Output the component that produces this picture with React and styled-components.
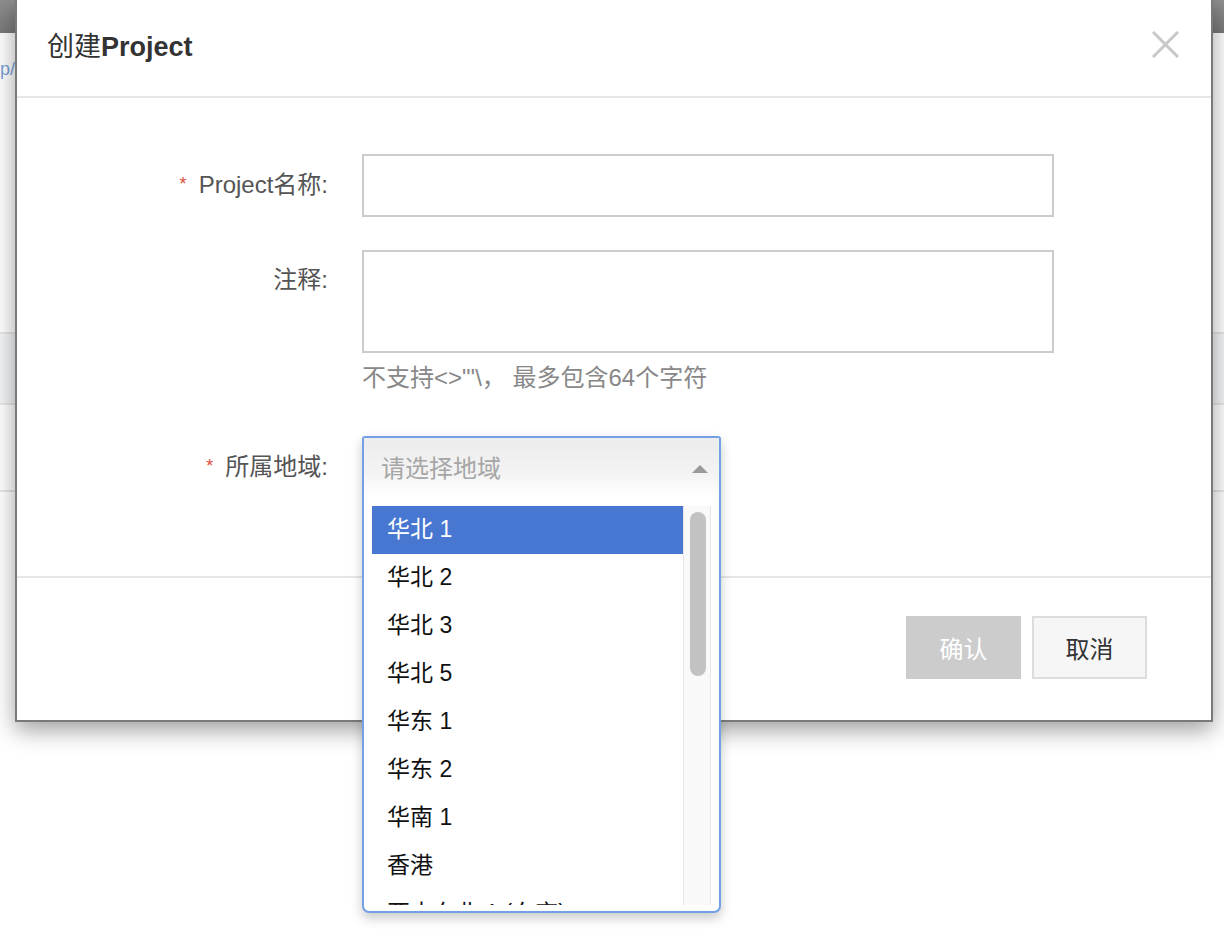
import React from 'react';
import styled, { createGlobalStyle } from 'styled-components';

const GlobalStyle = createGlobalStyle`
  html, body {
    margin: 0;
    padding: 0;
    background: #fff;
    font-family: "Liberation Sans", "Noto Sans CJK SC", sans-serif;
  }
  * { box-sizing: border-box; }
`;

const Page = styled.div`
  position: relative;
  width: 1224px;
  height: 944px;
  overflow: hidden;
  background: #fff;
`;

const TopBar = styled.div`
  height: 33px;
  background: linear-gradient(#8e8e8e, #7a7a7a);
`;

const Crumb = styled.div`
  margin: 26px 0 0 0;
  font-size: 18px;
  color: #7b9fd8;
  height: 28px;
`;

const BgTable = styled.div`
  margin-top: 245px;
`;

const BgRow = styled.div`
  height: ${p => p.$h}px;
  border-top: 2px solid #e6e6e6;
  background: ${p => (p.$hover ? '#f4f5f7' : '#fff')};
`;

const Modal = styled.div`
  position: absolute;
  left: 15px;
  top: 0;
  width: 1198px;
  background: #fff;
  border: 2px solid #7a7a7a;
  border-top: none;
  box-shadow: 0 8px 22px rgba(0, 0, 0, 0.38);
  z-index: 2;
`;

const Header = styled.div`
  height: 98px;
  display: flex;
  align-items: center;
  justify-content: space-between;
  padding: 0 32px 8px 30px;
  border-bottom: 2px solid #e6e6e6;
`;

const Title = styled.h2`
  margin: 0;
  font-size: 27px;
  font-weight: normal;
  color: #333;
  b { font-weight: bold; }
`;

const Close = styled.button`
  border: none;
  background: none;
  padding: 0;
  width: 28px;
  height: 28px;
  display: flex;
  align-items: center;
  justify-content: center;
  cursor: pointer;
`;

const Body = styled.div`
  padding: 56px 0 80px;
`;

const Row = styled.div`
  display: grid;
  grid-template-columns: 311px 692px;
  column-gap: 34px;
  margin-top: ${p => p.$mt || 0}px;
`;

const Label = styled.label`
  text-align: right;
  font-size: 24px;
  color: #555;
  line-height: 28px;
  padding-top: ${p => p.$pt}px;
`;

const Star = styled.span`
  color: #e04b3c;
  font-size: 18px;
  margin-right: 12px;
  vertical-align: 3px;
`;

const Input = styled.input`
  display: block;
  width: 692px;
  height: 63px;
  border: 2px solid #cccccc;
  outline: none;
  font-size: 22px;
  padding: 0 16px;
`;

const Textarea = styled.textarea`
  display: block;
  width: 692px;
  height: 103px;
  border: 2px solid #cccccc;
  outline: none;
  resize: none;
  font-size: 22px;
  padding: 12px 16px;
  font-family: inherit;
`;

const Hint = styled.div`
  margin-top: 12px;
  font-size: 24px;
  line-height: 26px;
  color: #888;
  white-space: pre;
`;

const SelectSlot = styled.div`
  position: relative;
  height: 60px;
`;

const SelectPanel = styled.div`
  position: absolute;
  left: 0;
  top: 0;
  width: 359px;
  height: 477px;
  border: 2px solid #74a0e6;
  border-radius: 3px 3px 7px 7px;
  background: #fff;
  box-shadow: 0 5px 12px rgba(0, 0, 0, 0.22);
  display: flex;
  flex-direction: column;
  z-index: 5;
`;

const SelectHead = styled.div`
  height: 58px;
  flex: none;
  display: flex;
  align-items: center;
  justify-content: space-between;
  padding: 0 11px 2px 17px;
  background: linear-gradient(#ececec, #f3f3f3 60%, #fff);
  font-size: 24px;
  color: #a6a6a6;
`;

const Caret = styled.span`
  width: 0;
  height: 0;
  border-left: 8px solid transparent;
  border-right: 8px solid transparent;
  border-bottom: 8px solid #9a9a9a;
  margin-top: 6px;
`;

const List = styled.div`
  margin: 10px 8px 6px 8px;
  height: 399px;
  display: flex;
  overflow: hidden;
`;

const Options = styled.ul`
  list-style: none;
  margin: 0;
  padding: 0;
  width: 311px;
  flex: none;
`;

const Option = styled.li`
  height: 48px;
  display: flex;
  align-items: center;
  padding: 0 0 7px 15px;
  font-size: 23px;
  white-space: nowrap;
  color: ${p => (p.$active ? '#fff' : '#111')};
  background: ${p => (p.$active ? '#4877d1' : 'transparent')};
`;

const Track = styled.div`
  flex: 1;
  background: #f9f9f9;
  border-left: 1px solid #e6e6e6;
  border-right: 1px solid #e6e6e6;
  padding: 6px 0 0 6px;
`;

const Thumb = styled.div`
  width: 16px;
  height: 164px;
  border-radius: 8px;
  background: #c2c2c2;
`;

const Footer = styled.div`
  border-top: 2px solid #e6e6e6;
  padding: 38px 64px 41px 0;
  display: flex;
  justify-content: flex-end;
  gap: 11px;
`;

const Button = styled.button`
  width: 115px;
  height: 63px;
  font-size: 24px;
  font-family: inherit;
  cursor: pointer;
  border: ${p => (p.$primary ? 'none' : '2px solid #dddddd')};
  background: ${p => (p.$primary ? '#cccccc' : '#f6f6f6')};
  color: ${p => (p.$primary ? '#fff' : '#333')};
`;

const regions = ['华北 1', '华北 2', '华北 3', '华北 5', '华东 1', '华东 2', '华南 1', '香港', '亚太东北 1 (东京)'];

function App() {
  return (
    <Page>
      <GlobalStyle />
      <TopBar />
      <Crumb>p/</Crumb>
      <BgTable>
        <BgRow $h={71} $hover />
        <BgRow $h={87} />
        <BgRow $h={40} />
      </BgTable>

      <Modal>
        <Header>
          <Title>创建<b>Project</b></Title>
          <Close aria-label="close">
            <svg width="27" height="27" viewBox="0 0 27 27">
              <path d="M1 1 L26 26 M26 1 L1 26" stroke="#c8c8c8" strokeWidth="3" />
            </svg>
          </Close>
        </Header>

        <Body>
          <Row>
            <Label $pt={16}><Star>*</Star>Project名称:</Label>
            <Input />
          </Row>
          <Row $mt={33}>
            <Label $pt={16}>注释:</Label>
            <div>
              <Textarea />
              <Hint>{'不支持<>"\'\\， 最多包含64个字符'}</Hint>
            </div>
          </Row>
          <Row $mt={45}>
            <Label $pt={16}><Star>*</Star>所属地域:</Label>
            <SelectSlot>
              <SelectPanel>
                <SelectHead>
                  请选择地域
                  <Caret />
                </SelectHead>
                <List>
                  <Options>
                    {regions.map((r, i) => (
                      <Option key={r} $active={i === 0}>{r}</Option>
                    ))}
                  </Options>
                  <Track>
                    <Thumb />
                  </Track>
                </List>
              </SelectPanel>
            </SelectSlot>
          </Row>
        </Body>

        <Footer>
          <Button $primary>确认</Button>
          <Button>取消</Button>
        </Footer>
      </Modal>
    </Page>
  );
}

export default App;
